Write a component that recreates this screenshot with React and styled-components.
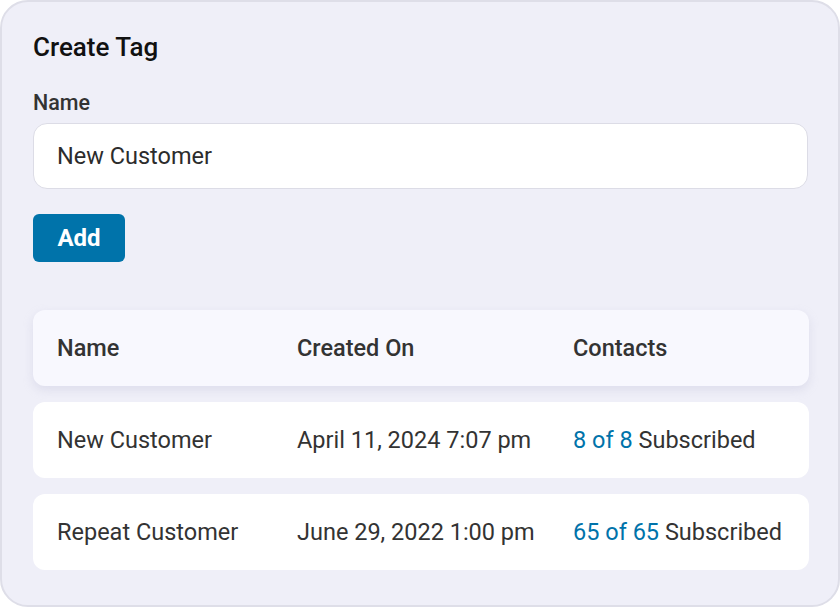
import React from "react";
import styled, { createGlobalStyle } from "styled-components";

const Global = createGlobalStyle`
  html, body { margin: 0; padding: 0; background: #ffffff; }
  body { font-family: Roboto, "Noto Sans", Arial, sans-serif; color: #2c2c2c; }
  * { box-sizing: border-box; }
`;

const Card = styled.div`
  width: 840px;
  height: 607px;
  background: #efeff8;
  border: 2px solid #dedee8;
  border-radius: 28px;
  padding: 29px 31px 0 31px;
  display: flex;
  flex-direction: column;
`;

const Title = styled.h2`
  margin: 0;
  font-size: 26px;
  font-weight: 500;
  color: #111;
  line-height: 32px;
`;

const Label = styled.label`
  margin-top: 28px;
  font-size: 21.5px;
  font-weight: 500;
  color: #333;
  line-height: 24px;
`;

const Input = styled.input`
  margin-top: 8px;
  height: 66px;
  width: 775px;
  border: 1px solid #dcdce6;
  border-radius: 14px;
  background: #fff;
  padding: 0 23px;
  font-family: inherit;
  font-size: 23.5px;
  color: #2c2c2c;
  outline: none;
`;

const Button = styled.button`
  margin-top: 25px;
  align-self: flex-start;
  width: 92px;
  height: 48px;
  border: none;
  border-radius: 6px;
  background: #0073aa;
  color: #fff;
  font-family: inherit;
  font-size: 24px;
  font-weight: 700;
`;

const Table = styled.div`
  margin-top: 48px;
  display: flex;
  flex-direction: column;
  gap: 16px;
`;

const Row = styled.div`
  height: 76px;
  width: 776px;
  display: grid;
  grid-template-columns: 240px 276px 1fr;
  align-items: center;
  padding: 0 24px;
  border-radius: 12px;
  background: ${(p) => (p.$head ? "#f8f8fe" : "#ffffff")};
  box-shadow: ${(p) => (p.$head ? "0 4px 10px rgba(190,190,215,0.35)" : "none")};
  font-size: 23.5px;
  font-weight: ${(p) => (p.$head ? 500 : 400)};
  color: #333;
  white-space: nowrap;
`;

const Link = styled.span`
  color: #0073aa;
`;

const rows = [
  { name: "New Customer", date: "April 11, 2024 7:07 pm", n: "8 of 8" },
  { name: "Repeat Customer", date: "June 29, 2022 1:00 pm", n: "65 of 65" },
];

export default function App() {
  return (
    <>
      <Global />
      <Card>
        <Title>Create Tag</Title>
        <Label>Name</Label>
        <Input defaultValue="New Customer" />
        <Button>Add</Button>
        <Table>
          <Row $head>
            <span>Name</span>
            <span>Created On</span>
            <span>Contacts</span>
          </Row>
          {rows.map((r) => (
            <Row key={r.name}>
              <span>{r.name}</span>
              <span>{r.date}</span>
              <span>
                <Link>{r.n}</Link> Subscribed
              </span>
            </Row>
          ))}
        </Table>
      </Card>
    </>
  );
}
